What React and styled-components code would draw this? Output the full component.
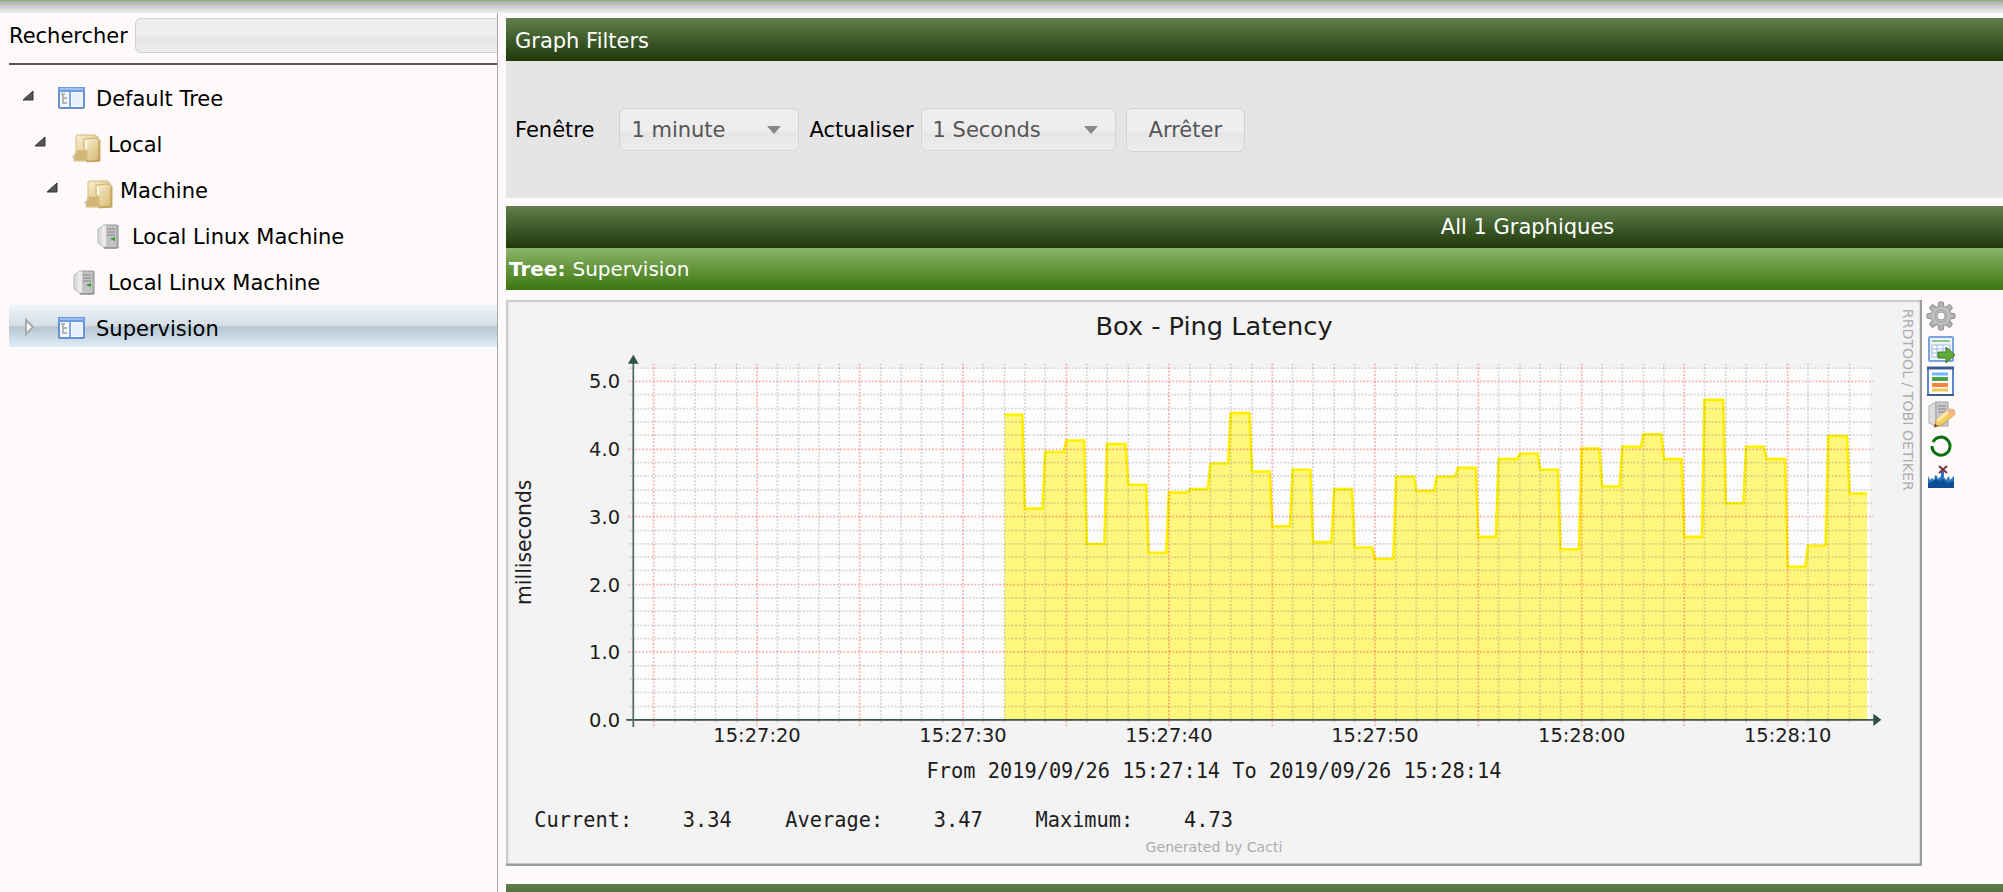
import { useState } from "react";
import styled, { createGlobalStyle } from "styled-components";

const tree = [
  { id: 1, depth: 0, kind: "tree", label: "Default Tree", toggle: "open" },
  { id: 2, depth: 1, kind: "folder", label: "Local", toggle: "open" },
  { id: 3, depth: 2, kind: "folder", label: "Machine", toggle: "open" },
  { id: 4, depth: 3, kind: "server", label: "Local Linux Machine" },
  { id: 5, depth: 1, kind: "server", label: "Local Linux Machine" },
  { id: 6, depth: 0, kind: "tree", label: "Supervision", toggle: "closed" },
];

// one sample per second, first one at 15:27:32
const samples = [
  4.5, 3.12, 3.95, 4.12, 2.6, 4.07, 3.47, 2.47, 3.36, 3.41, 3.78, 4.53, 3.67,
  2.86, 3.7, 2.63, 3.41, 2.55, 2.37, 3.59, 3.38, 3.59, 3.72, 2.7, 3.85, 3.93,
  3.7, 2.52, 4.01, 3.44, 4.03, 4.22, 3.85, 2.7, 4.73, 3.2, 4.03, 3.85, 2.26,
  2.57, 4.19, 3.34,
];

const legend = [
  { x: 32, text: "Current:" },
  { x: 200, text: "3.34" },
  { x: 316, text: "Average:" },
  { x: 484, text: "3.47" },
  { x: 599, text: "Maximum:" },
  { x: 767, text: "4.73" },
];

const LEFT = 144;
const RIGHT = 1543;
const TOP = 76;
const BOTTOM = 475;
const START = 14;
const FIRST_SAMPLE = 32;

const timeX = (t) => Math.round(LEFT + ((t - START) * (RIGHT - LEFT)) / 60);
const valueY = (v) => Math.round(BOTTOM - (v * 383) / 5);

const clock = (t) =>
  t < 60 ? `15:27:${t}` : `15:28:${String(t - 60).padStart(2, "0")}`;

const TreeIcon = () => (
  <svg width="36" height="42" viewBox="0 0 36 42" aria-hidden="true">
    <rect x="5" y="13" width="25" height="20" rx="1" fill="#f4f8ff" stroke="#6790cf" strokeWidth="2" />
    <rect x="4" y="12" width="27" height="5" fill="#6c9be0" />
    <rect x="6" y="13" width="23" height="2" fill="#9cc0f3" />
    <path d="M16 17v15" stroke="#7fa8e4" strokeWidth="2" />
    <path d="M18 18h10v13H18z" fill="#e9f0fc" />
    <path d="M7 19h4M9 19v10M9 23h4M9 28h4" stroke="#b4b4b4" strokeWidth="2" fill="none" />
  </svg>
);

const FolderIcon = () => (
  <svg width="36" height="42" viewBox="0 0 36 42" aria-hidden="true">
    <defs>
      <linearGradient id="paper" x1="0" x2="1" y1="0" y2="1">
        <stop offset="0" stopColor="#fbf2d2" />
        <stop offset="1" stopColor="#d4b36b" />
      </linearGradient>
    </defs>
    <path d="M6 36l4-5v8z" fill="#c9c5bd" />
    <path d="M11 14h18l3 2v19l-10 5H8l2-8 0-17z" fill="url(#paper)" stroke="#d3bb80" />
    <path d="M11 29c-1 3-1 6-3 10h12v-9z" fill="#d3b677" />
    <path d="M20 18l9-1 5 2v21l-13 1v-11l-3-2V18z" fill="url(#paper)" stroke="#cdb071" />
    <path d="M20 19v9" stroke="#fff7dc" strokeWidth="2" />
    <path d="M21 40h12V20" fill="none" stroke="#b59350" />
  </svg>
);

const ServerIcon = () => (
  <svg width="36" height="42" viewBox="0 0 36 42" aria-hidden="true">
    <path d="M8 16l6-4v22l-6-4z" fill="#dcdcdc" stroke="#b5b5b5" />
    <path d="M14 12h13v23H14z" fill="#c3c3c6" stroke="#9a9a9a" />
    <path d="M12 13l4-1v22l-4-1z" fill="#ebebeb" />
    <path d="M17 16h8M17 19h8M17 22h8" stroke="#85858c" />
    <path d="M20 26l5-2v4z" fill="#2fa12f" />
    <path d="M14 35h14V12" fill="none" stroke="#858585" />
  </svg>
);

const Toggle = ({ state }) => (
  <svg width="44" height="42" viewBox="0 0 44 42" aria-hidden="true">
    {state === "open" ? (
      <path d="M23 16v9H13z" fill="#555" stroke="#333" />
    ) : (
      <path d="M16 15l7 7-7 7z" fill="#fff" stroke="#aaa" strokeWidth="2" />
    )}
  </svg>
);

const GearIcon = () => (
  <svg width="30" height="32" viewBox="0 0 30 32" aria-hidden="true">
    <g fill="#b5b5b5" stroke="#8b8b8b">
      {[0, 45, 90, 135].map((angle) => (
        <path
          key={angle}
          d="M12 6l1-4h4l1 4v20l-1 4h-4l-1-4z"
          transform={`rotate(${angle} 15 16)`}
        />
      ))}
    </g>
    <circle cx="15" cy="16" r="9" fill="#c3c3c3" />
    <circle cx="15" cy="16" r="6" fill="none" stroke="#adadad" strokeWidth="2" />
    <circle cx="15" cy="16" r="4" fill="#fffafa" stroke="#a0a0a0" />
  </svg>
);

const ExportIcon = () => (
  <svg width="30" height="32" viewBox="0 0 30 32" aria-hidden="true">
    <rect x="3" y="4" width="24" height="24" rx="1" fill="#edf4ff" stroke="#7ba4df" strokeWidth="2" />
    <path d="M6 8h18" stroke="#8dc78a" strokeWidth="2" />
    <path d="M6 12h18v12H6zM6 16h18M6 20h18M11 12v12M17 12v12" fill="#fff" stroke="#9db9e6" />
    <path d="M12 19h8v-5l9 8-9 8v-5h-8z" fill="#62ab3b" stroke="#39781d" />
  </svg>
);

const ListIcon = () => (
  <svg width="30" height="32" viewBox="0 0 30 32" aria-hidden="true">
    <rect x="2" y="2" width="25" height="27" fill="#fff" stroke="#5f86c8" strokeWidth="2" />
    <path d="M1 2h27" stroke="#3d5c93" strokeWidth="3" />
    <path d="M1 29h27" stroke="#3d5c93" strokeWidth="2" />
    <path d="M6 8h16" stroke="#6cb6fb" strokeWidth="3" />
    <path d="M6 13h16" stroke="#4ca34c" strokeWidth="4" />
    <path d="M6 19h16" stroke="#ff8140" strokeWidth="4" />
    <path d="M6 24h16" stroke="#f1c550" strokeWidth="3" />
  </svg>
);

const EditIcon = () => (
  <svg width="30" height="32" viewBox="0 0 30 32" aria-hidden="true">
    <path d="M3 7l7-4v24l-7-3z" fill="#dedede" stroke="#b1b1b1" />
    <path d="M10 3h12v24H10z" fill="#cbcbcd" stroke="#a0a0a0" />
    <path d="M12 7h8M12 10h8M12 13h8" stroke="#7c7c80" />
    <path d="M8 28l3-8 12-10 5 1 1 4-13 11z" fill="#f4cd62" stroke="#c99a45" />
    <path d="M11 22l13-11" stroke="#ffebab" strokeWidth="3" />
    <path d="M23 10l5 1 1 4-3 2-5-5z" fill="#f2b38f" />
    <path d="M8 28l1-3 3 2z" fill="#533" />
  </svg>
);

const RefreshIcon = () => (
  <svg width="30" height="32" viewBox="0 0 30 32" aria-hidden="true">
    <path d="M7 10a9 9 0 1 1-1 4" fill="none" stroke="#0a700d" strokeWidth="3" />
  </svg>
);

const SpikeIcon = () => (
  <svg width="30" height="32" viewBox="0 0 30 32" aria-hidden="true">
    <path d="M2 23V11l2 4 2-2 2 2 1-5 2 1 1 3 3-3V3h3v9l2 3 3-4 1 4 2-2 2-2v12z" fill="#2877bf" />
    <path d="M2 23v-5l4-1 4-3 3 2 4-2 4 4 7-2v7z" fill="#0d4f94" />
    <path d="M13 1l8 7M21 1l-8 7" stroke="#7a3540" strokeWidth="2" />
  </svg>
);

const actions = [
  { label: "Utilitaires", Icon: GearIcon },
  { label: "Export CSV", Icon: ExportIcon },
  { label: "Zoom", Icon: ListIcon },
  { label: "Modifier", Icon: EditIcon },
  { label: "Temps réel", Icon: RefreshIcon },
  { label: "Supprimer les pics", Icon: SpikeIcon },
];

const nodeIcons = { tree: TreeIcon, folder: FolderIcon, server: ServerIcon };

const TreeNode = ({ node, selected, onSelect }) => {
  const Icon = nodeIcons[node.kind];

  return (
    <Node $depth={node.depth} $selected={selected}>
      {node.toggle ? (
        <ToggleButton type="button" aria-label={`${node.label} ${node.toggle}`}>
          <Toggle state={node.toggle} />
        </ToggleButton>
      ) : (
        <ToggleSpace />
      )}
      <Icon />
      <NodeLink
        href="#"
        onClick={(e) => {
          e.preventDefault();
          onSelect(node.id);
        }}
      >
        {node.label}
      </NodeLink>
    </Node>
  );
};

const Dropdown = ({ id, options, wide }) => (
  <SelectBox>
    <Select id={id} $wide={wide}>
      {options.map((option) => (
        <option key={option}>{option}</option>
      ))}
    </Select>
    <Caret width="14" height="8" viewBox="0 0 14 8" aria-hidden="true">
      <path d="M0 0h14L7 8z" fill="#888" />
    </Caret>
  </SelectBox>
);

const PingGraph = () => {
  const seconds = Array.from({ length: 59 }, (_, i) => START + 1 + i);
  const levels = Array.from({ length: 27 }, (_, i) => i);

  const line = samples
    .map((v, i) => {
      const t = FIRST_SAMPLE + i;
      return `${i ? "L" : "M"}${timeX(t)} ${valueY(v)}H${timeX(t + 1) - 3}`;
    })
    .join("");
  const area = `${line}V${BOTTOM}H${timeX(FIRST_SAMPLE)}z`;

  return (
    <Graph viewBox="0 0 1602 640" role="img" aria-label="Box - Ping Latency">
      <rect width="1602" height="640" fill="#f3f3f3" />
      <path d="M1 640V1H1602" fill="none" stroke="#c9cdcd" strokeWidth="3" />
      <path d="M0 639H1601V0" fill="none" stroke="#999c9c" strokeWidth="3" />
      <rect x={LEFT} y={TOP} width={RIGHT - LEFT} height={BOTTOM - TOP} fill="#fdfdfd" />
      <path d={area} fill="#fef67d" />
      <path d={line} fill="none" stroke="#fff000" strokeWidth="3" />

      {levels.map((i) =>
        i % 5 ? (
          <MinorLine key={i} d={`M${LEFT - 4} ${valueY(i / 5)}H${RIGHT + 4}`} />
        ) : (
          <MajorLine key={i} d={`M${LEFT - 6} ${valueY(i / 5)}H${RIGHT + 4}`} />
        )
      )}
      {seconds.map((t) =>
        t % 5 ? (
          <MinorLine key={t} d={`M${timeX(t)} ${TOP - 4}V${BOTTOM + 4}`} />
        ) : (
          <MajorLine key={t} d={`M${timeX(t)} ${TOP - 4}V${BOTTOM + 8}`} />
        )
      )}

      <path d={`M${LEFT - 8} ${BOTTOM}H${RIGHT + 6}`} stroke="#3c554b" strokeWidth="2" />
      <path d={`M${LEFT} ${BOTTOM + 8}V${TOP - 8}`} stroke="#4f7065" strokeWidth="2" />
      <path d={`M${LEFT - 6} ${TOP - 4}h12l-6 -10z`} fill="#2c5147" />
      <path d={`M${RIGHT + 4} ${BOTTOM - 7}v14l9 -7z`} fill="#2c5147" />

      {[0, 1, 2, 3, 4, 5].map((v) => (
        <AxisText key={v} x="129" y={valueY(v) + 8} textAnchor="end">
          {v.toFixed(1)}
        </AxisText>
      ))}
      {[20, 30, 40, 50, 60, 70].map((t) => (
        <AxisText key={t} x={timeX(t)} y="500" textAnchor="middle">
          {clock(t)}
        </AxisText>
      ))}
      <UnitText transform="translate(28 345) rotate(-90)">milliseconds</UnitText>

      <GraphTitle x="801" y="40" textAnchor="middle">
        Box - Ping Latency
      </GraphTitle>
      <MonoText x="801" y="541" textAnchor="middle">
        From 2019/09/26 15:27:14 To 2019/09/26 15:28:14
      </MonoText>
      {legend.map((item) => (
        <MonoText key={item.x} x={item.x} y="596">
          {item.text}
        </MonoText>
      ))}
      <FaintText x="801" y="625" textAnchor="middle">
        Generated by Cacti
      </FaintText>
      <FaintText transform="translate(1580 10) rotate(90)">
        RRDTOOL / TOBI OETIKER
      </FaintText>
    </Graph>
  );
};

export default function App() {
  const [selected, setSelected] = useState(6);

  return (
    <>
      <GlobalStyle />
      <Page>
        <TopShadow />
        <Body>
          <Sidebar>
            <Search>
              <label htmlFor="search">Rechercher</label>
              <SearchInput id="search" type="text" />
            </Search>
            <Tree>
              {tree.map((node) => (
                <TreeNode
                  key={node.id}
                  node={node}
                  selected={selected === node.id}
                  onSelect={setSelected}
                />
              ))}
            </Tree>
          </Sidebar>
          <Main>
            <FilterTitle>Graph Filters</FilterTitle>
            <Filters>
              <FilterLabel htmlFor="timespan" $space={25}>
                Fenêtre
              </FilterLabel>
              <Dropdown id="timespan" options={["1 minute", "5 minutes"]} />
              <FilterLabel htmlFor="refresh" $space={7}>
                Actualiser
              </FilterLabel>
              <Dropdown id="refresh" options={["1 Seconds", "5 Seconds"]} wide />
              <StopButton type="button">Arrêter</StopButton>
            </Filters>
            <GraphsTitle>All 1 Graphiques</GraphsTitle>
            <TreeTitle>
              <strong>Tree:</strong> Supervision
            </TreeTitle>
            <GraphRow>
              <PingGraph />
              <Actions>
                {actions.map(({ label, Icon }) => (
                  <Action key={label} href="#" aria-label={label}>
                    <Icon />
                  </Action>
                ))}
              </Actions>
            </GraphRow>
            <GraphsTitle />
          </Main>
        </Body>
      </Page>
    </>
  );
}

const GlobalStyle = createGlobalStyle`
  * {
    box-sizing: border-box;
  }

  body {
    margin: 0;
    background-color: #fffafa;
    color: #000;
    font-family: "DejaVu Sans", Verdana, sans-serif;
    font-size: 21px;
    overflow: hidden;
  }

  svg {
    display: block;
  }
`;

const Page = styled.div`
  height: 100vh;
  display: flex;
  flex-direction: column;
  overflow: hidden;
`;

const TopShadow = styled.div`
  flex: none;
  height: 13px;
  border-top: 1px solid #8db368;
  background: linear-gradient(#adadad, #f0efef);
`;

const Body = styled.div`
  flex: 1;
  min-height: 0;
  display: flex;
  gap: 8px;
`;

const Sidebar = styled.nav`
  flex: none;
  width: 498px;
  padding-left: 9px;
  border-right: 1px solid #a9a9a9;
  overflow: hidden;
`;

const Search = styled.div`
  display: flex;
  align-items: center;
  gap: 7px;
  height: 52px;
  padding-bottom: 5px;
  border-bottom: 2px solid #555;
  white-space: nowrap;
`;

const SearchInput = styled.input`
  flex: none;
  width: 400px;
  height: 35px;
  padding: 0 8px;
  border: 1px solid #d0d0d0;
  border-radius: 6px;
  background: linear-gradient(#eee 50%, #e6e6e6 60%, #ededed);
  color: #555;
  font: inherit;
`;

const Tree = styled.ul`
  display: flex;
  flex-direction: column;
  gap: 4px;
  margin: 10px 0 0;
  padding: 0;
  list-style: none;
`;

const Node = styled.li`
  display: flex;
  height: 42px;
  padding-left: ${({ $depth }) => $depth * 12 + 1}px;
  background: ${({ $selected }) =>
    $selected
      ? "linear-gradient(#f1f5f8, #d3dee5 50%, #b5c6d0 52%, #dfeef8)"
      : "none"};
`;

const ToggleButton = styled.button`
  flex: none;
  width: 44px;
  padding: 0;
  border: 0;
  background: none;
  cursor: pointer;
`;

const ToggleSpace = styled.span`
  flex: none;
  width: 44px;
`;

const NodeLink = styled.a`
  padding: 6px 0 0 6px;
  line-height: 36px;
  color: inherit;
  text-decoration: none;
  white-space: nowrap;
`;

const Main = styled.main`
  flex: none;
  min-width: 102vw;
  padding-top: 5px;
`;

const TitleBar = styled.div`
  display: flex;
  align-items: center;
  height: 42px;
  background: linear-gradient(#607f4c, #1f380a);
  color: #fff;
`;

const FilterTitle = styled(TitleBar)`
  height: 43px;
  padding: 3px 9px 0;
`;

const GraphsTitle = styled(TitleBar)`
  justify-content: center;
`;

const TreeTitle = styled(TitleBar)`
  gap: 7px;
  padding: 0 3px;
  background: linear-gradient(#8bb46a, #3c760e);
  font-size: 20px;
`;

const Filters = styled.form`
  display: flex;
  align-items: center;
  height: 137px;
  padding: 0 9px;
  margin-bottom: 8px;
  background-color: #e5e5e5;
`;

const FilterLabel = styled.label`
  margin-right: ${({ $space }) => $space}px;
`;

const SelectBox = styled.div`
  display: grid;
  align-items: center;
  margin-right: 10px;

  & > * {
    grid-area: 1 / 1;
  }
`;

const Select = styled.select`
  appearance: none;
  width: ${({ $wide }) => ($wide ? 195 : 180)}px;
  height: 43px;
  padding: 0 11px;
  border: 1px solid #d3d3d3;
  border-radius: 6px;
  background: linear-gradient(#eee 50%, #e6e6e6 60%, #ededed);
  color: #555;
  font: inherit;
`;

const Caret = styled.svg`
  justify-self: end;
  margin-right: 18px;
  pointer-events: none;
`;

const StopButton = styled.button`
  height: 44px;
  padding: 0 22px;
  border: 1px solid #d3d3d3;
  border-radius: 6px;
  background: linear-gradient(#eee 50%, #e6e6e6 60%, #ededed);
  color: #555;
  font: inherit;
`;

const GraphRow = styled.div`
  display: flex;
  gap: 4px;
  padding: 10px 0 18px;
`;

const Graph = styled.svg`
  flex: none;
  width: 1416px;
  max-width: 100%;
  height: auto;
  font-family: "DejaVu Sans", Verdana, sans-serif;
`;

const MinorLine = styled.path`
  stroke: rgba(120, 120, 120, 0.3);
  stroke-width: 2px;
  stroke-dasharray: 2 2;
`;

const MajorLine = styled.path`
  stroke: rgba(240, 60, 60, 0.4);
  stroke-width: 2px;
  stroke-dasharray: 2 2;
`;

const GraphTitle = styled.text`
  font-size: 29px;
  fill: #1c1c1c;
`;

const AxisText = styled.text`
  font-size: 22px;
  fill: #1c1c1c;
`;

const UnitText = styled.text`
  font-size: 23px;
  fill: #1c1c1c;
`;

const MonoText = styled.text`
  font-family: "DejaVu Sans Mono", monospace;
  font-size: 23px;
  fill: #1c1c1c;
`;

const FaintText = styled.text`
  font-size: 16px;
  fill: #adadad;
`;

const Actions = styled.div`
  display: flex;
  flex-direction: column;
`;

const Action = styled.a`
  height: 33px;
`;
